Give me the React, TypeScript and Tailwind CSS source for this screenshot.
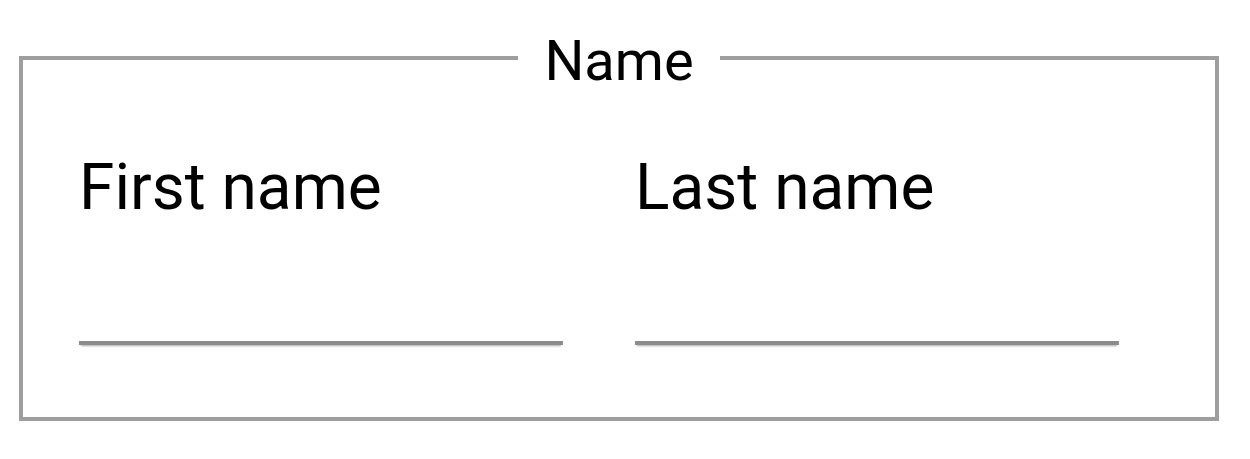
export default function App() {
  return (
    <div className="min-h-screen bg-white pt-[13px] pl-[19px] font-['Roboto',sans-serif] text-black">
      <fieldset className="w-[1200px] border-4 border-[#9e9e9e] px-[56px] pt-[47px] pb-[72px]">
        <legend className="mx-auto px-[26px] pt-[6px] text-[56px]">Name</legend>
        <div className="flex gap-[72px]">
          <Field label="First name" />
          <Field label="Last name" />
        </div>
      </fieldset>
    </div>
  );
}

function Field({ label }: { label: string }) {
  return (
    <label className="flex w-[484px] flex-col">
      <span className="text-[64px] leading-[75px]">{label}</span>
      <input
        type="text"
        className="h-[120px] w-full border-b-4 border-[#8c8c8c] bg-transparent text-[64px] shadow-[0_3px_2px_-2px_rgba(0,0,0,0.35)] outline-none"
      />
    </label>
  );
}
